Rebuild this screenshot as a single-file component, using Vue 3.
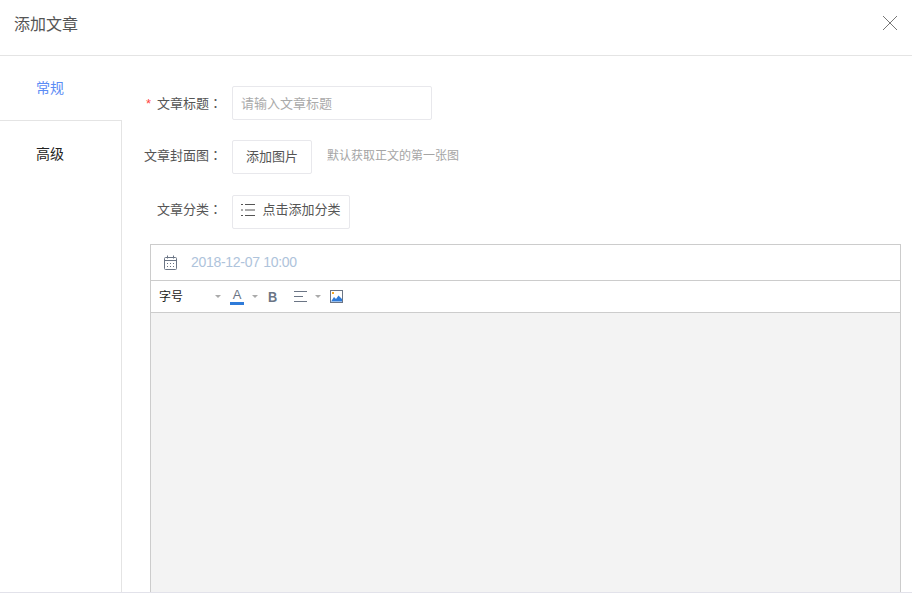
<script setup>
const tabs = [
  { label: '常规', active: true },
  { label: '高级', active: false }
]
</script>

<template>
  <div class="dialog">
    <header class="head">
      <h1 class="title">添加文章</h1>
      <svg class="close" width="14" height="14" viewBox="0 0 14 14">
        <path d="M0 0L14 14M14 0L0 14" stroke="#777" stroke-width="1" fill="none" />
      </svg>
    </header>
    <div class="body">
      <aside class="side">
        <div v-for="t in tabs" :key="t.label" class="tab" :class="{ active: t.active }">{{ t.label }}</div>
      </aside>
      <main class="main">
        <div class="row row-title">
          <label class="label"><span class="req">*</span>文章标题<span class="colon">：</span></label>
          <div class="input">请输入文章标题</div>
        </div>
        <div class="row row-cover">
          <label class="label">文章封面图<span class="colon">：</span></label>
          <div class="btn btn-pic">添加图片</div>
          <span class="hint">默认获取正文的第一张图</span>
        </div>
        <div class="row row-cat">
          <label class="label">文章分类<span class="colon">：</span></label>
          <div class="btn btn-cat">
            <svg width="14" height="12" viewBox="0 0 14 12">
              <path d="M0 0.5h2M4 0.5h10M0 6h2M4 6h10M0 11.5h2M4 11.5h10" stroke="#555" stroke-width="1" fill="none" />
            </svg>
            <span>点击添加分类</span>
          </div>
        </div>
        <section class="editor">
          <div class="date">
            <svg width="14" height="15" viewBox="0 0 14 15">
              <rect x="0.5" y="2.5" width="12" height="12" rx="1" stroke="#6b7585" fill="none" />
              <path d="M0.5 5.5h12M3.5 0.5v3M9.5 0.5v3" stroke="#6b7585" fill="none" />
              <path d="M3 8.5h1M6 8.5h1M9 8.5h1M3 11.5h1M6 11.5h1M9 11.5h1" stroke="#6b7585" fill="none" />
            </svg>
            <span class="date-text">2018-12-07 10:00</span>
          </div>
          <div class="toolbar">
            <span class="size">字号</span>
            <i class="caret caret-size"></i>
            <span class="color">A</span>
            <i class="caret caret-color"></i>
            <b class="bold">B</b>
            <svg class="align" width="13" height="11" viewBox="0 0 13 11">
              <path d="M0 0.5h13M0 5.5h9M0 10.5h13" stroke="#6b7585" fill="none" />
            </svg>
            <i class="caret caret-align"></i>
            <svg class="pic" width="13" height="13" viewBox="0 0 13 13">
              <rect x="0.5" y="0.5" width="12" height="12" fill="#fff" stroke="#6b7585" />
              <rect x="2" y="2" width="2" height="2" fill="#f5a623" />
              <path d="M1 11.5L4 7l2 2 2.5-3.5L12 9v2.5z" fill="#2f7bd9" />
            </svg>
          </div>
          <div class="canvas"></div>
        </section>
      </main>
    </div>
    <footer class="foot"></footer>
  </div>
</template>

<style>
html, body { margin: 0; background: #fff; }
</style>

<style scoped>
.dialog {
  width: 912px;
  height: 603px;
  display: flex;
  flex-direction: column;
  overflow: hidden;
  background: #fff;
  font-family: "Liberation Sans", "Noto Sans CJK SC", sans-serif;
  font-size: 13px;
  color: #333;
}
.head {
  height: 55px;
  box-sizing: content-box;
  flex: none;
  border-bottom: 1px solid #e4e4e4;
  display: flex;
  align-items: center;
  justify-content: space-between;
  padding: 0 15px 0 14px;
}
.head .close { margin-top: -9px; }
.title {
  margin: -6px 0 0;
  font-size: 16px;
  font-weight: 400;
  line-height: 24px;
  color: #555;
}
.body {
  flex: 1;
  min-height: 0;
  display: flex;
}
.side {
  width: 122px;
  flex: none;
  box-sizing: border-box;
  border-right: 1px solid #e4e4e4;
}
.tab {
  height: 66px;
  box-sizing: border-box;
  padding-top: 23px;
  text-align: center;
  line-height: 20px;
  width: 100px;
  font-size: 14px;
  color: #222;
}
.tab.active {
  color: #5b8cf5;
  height: 65px;
  width: 122px;
  margin-right: -1px;
  padding: 22px 22px 0 0;
  background: #fff;
  position: relative;
  border-bottom: 1px solid #e4e4e4;
}
.main {
  flex: 1;
  min-width: 0;
  display: flex;
  flex-direction: column;
  padding: 30px 11px 0 28px;
}
.row {
  display: flex;
  align-items: center;
}
.label {
  width: 82px;
  margin: 0 10px 0 -10px;
  text-align: right;
  flex: none;
  line-height: 20px;
  white-space: nowrap;
  color: #555;
}
.colon { font-family: "Noto Sans CJK TC", sans-serif; }
.req { color: #f44; margin-right: 6px; }
.input {
  width: 200px;
  height: 34px;
  box-sizing: border-box;
  border: 1px solid #e8e8ec;
  border-radius: 2px;
  padding-left: 8px;
  line-height: 33px;
  color: #aaa;
}
.row-cover { margin-top: 20px; }
.row-cat { margin-top: 21px; }
.row-cover .label { margin-top: -4px; }
.row-cat .label { margin-top: -6px; }
.btn {
  height: 34px;
  box-sizing: border-box;
  border: 1px solid #e8e8ec;
  border-radius: 2px;
  display: flex;
  align-items: center;
  justify-content: center;
  line-height: 20px;
  color: #555;
}
.btn-pic { width: 80px; }
.btn-cat { width: 118px; gap: 7px; padding-bottom: 4px; }
.hint {
  margin-left: 15px;
  margin-top: -3px;
  font-size: 12px;
  line-height: 20px;
  color: #a5a5a5;
}
.editor {
  margin-top: 15px;
  flex: 1;
  display: flex;
  flex-direction: column;
  border: 1px solid #ccc;
  border-bottom: 0;
  min-height: 0;
}
.date {
  height: 35px;
  flex: none;
  display: flex;
  align-items: center;
  gap: 13px;
  padding-left: 13px;
  border-bottom: 1px solid #ccc;
}
.date-text {
  font-size: 14px;
  letter-spacing: -0.3px;
  line-height: 18px;
  margin-top: -2px;
  color: #aec3db;
}
.toolbar {
  height: 31px;
  flex: none;
  display: flex;
  align-items: center;
  border-bottom: 1px solid #ccc;
  padding-left: 8px;
}
.size { font-size: 12px; line-height: 18px; color: #222; width: 56px; }
.caret {
  width: 0;
  height: 0;
  border: 3px solid transparent;
  border-top: 3px solid #aaa;
  border-bottom: 0;
}
.caret-color { margin-left: 8px; }
.color {
  margin-left: 9px;
  font-size: 13px;
  color: #6b7585;
  width: 14px;
  text-align: center;
  line-height: 14px;
  border-bottom: 3px solid #2f7bd9;
}
.bold {
  margin-left: 10px;
  font-size: 15px;
  line-height: 16px;
  color: #6b7585;
  width: 10px;
  transform: scaleX(0.85);
  transform-origin: left center;
}
.align { margin-left: 16px; }
.caret-align { margin-left: 8px; }
.pic { margin-left: 9px; }
.canvas {
  flex: 1;
  background: #f3f3f3;
}
.foot {
  height: 10px;
  flex: none;
  border-top: 1px solid #e2e2ea;
  background: #fff;
}
</style>
